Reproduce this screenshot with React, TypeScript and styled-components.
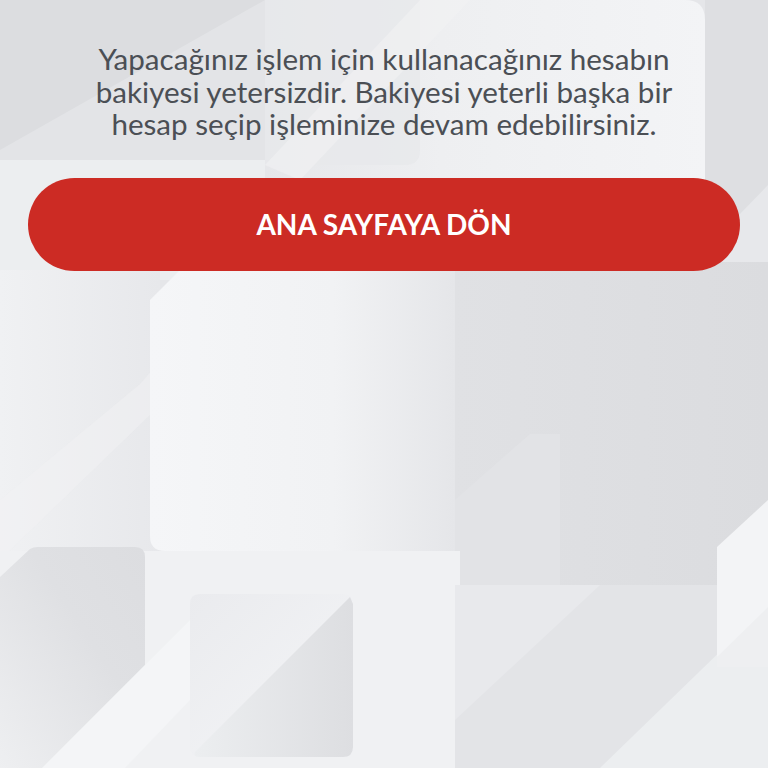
import React from "react";
import styled, { createGlobalStyle } from "styled-components";

const Global = createGlobalStyle`
  html, body { margin: 0; padding: 0; }
  body { font-family: Lato, "Noto Sans", sans-serif; background: #e5e6e9; }
`;

const Screen = styled.main`
  position: relative;
  width: 768px;
  height: 768px;
  overflow: hidden;
  background: #e5e6e9;
`;

const Backdrop = styled.svg`
  position: absolute;
  inset: 0;
  width: 768px;
  height: 768px;
  z-index: 0;
`;

const Content = styled.section`
  position: relative;
  z-index: 1;
  display: flex;
  flex-direction: column;
  align-items: center;
  padding: 43px 28px 0;
  gap: 37px;
`;

const Message = styled.p`
  margin: 0;
  width: 620px;
  text-align: center;
  font-family: Lato, "Noto Sans", sans-serif;
  font-size: 29.6px;
  line-height: 32.5px;
  color: #4b4f55;
`;

const HomeButton = styled.button`
  width: 712px;
  height: 93px;
  border: none;
  border-radius: 47px;
  background: #cc2b24;
  color: #ffffff;
  font-family: Lato, "Noto Sans", sans-serif;
  font-weight: 700;
  font-size: 28px;
  cursor: pointer;
`;

function Background() {
  return (
    <Backdrop viewBox="0 0 768 768" aria-hidden="true">
      <defs>
        <linearGradient id="panel" x1="0" y1="0" x2="1" y2="0">
          <stop offset="0" stopColor="#e6e7ea" />
          <stop offset="0.4" stopColor="#eeeff1" />
          <stop offset="1" stopColor="#f3f4f6" />
        </linearGradient>
        <linearGradient id="mid" x1="0" y1="0" x2="1" y2="0">
          <stop offset="0" stopColor="#f5f6f8" />
          <stop offset="0.6" stopColor="#f1f2f4" />
          <stop offset="1" stopColor="#e5e6e9" />
        </linearGradient>
        <linearGradient id="leftcol" x1="0" y1="0" x2="1" y2="0">
          <stop offset="0" stopColor="#f0f1f3" />
          <stop offset="1" stopColor="#e7e8eb" />
        </linearGradient>
        <linearGradient id="blshape" x1="0" y1="1" x2="1" y2="0">
          <stop offset="0" stopColor="#eeeff1" />
          <stop offset="0.6" stopColor="#dfe0e3" />
          <stop offset="1" stopColor="#dcdde0" />
        </linearGradient>
        <linearGradient id="sqlight" x1="0" y1="0" x2="1" y2="1">
          <stop offset="0" stopColor="#eaebee" />
          <stop offset="1" stopColor="#f4f5f7" />
        </linearGradient>
        <linearGradient id="sqdark" x1="0" y1="0" x2="1" y2="0">
          <stop offset="0" stopColor="#eceef0" />
          <stop offset="1" stopColor="#dddee1" />
        </linearGradient>
        <linearGradient id="right" x1="0" y1="0" x2="1" y2="0">
          <stop offset="0" stopColor="#e0e1e4" />
          <stop offset="1" stopColor="#dbdcdf" />
        </linearGradient>
      </defs>

      <rect x="0" y="0" width="268" height="162" fill="#e3e4e7" />
      <polygon points="0,0 265,0 0,150" fill="#dcdde0" />
      <rect x="0" y="160" width="270" height="120" fill="#eceef0" />
      <path d="M265,0 L685,0 Q705,0 705,20 L705,270 L265,270 Z" fill="url(#panel)" />
      <path d="M265,0 L420,0 L420,150 Q420,165 405,165 L265,165 Z" fill="#e7e8eb" opacity="0.8" />
      <polygon points="265,165 420,0 470,0 300,180" fill="#f1f2f4" opacity="0.6" />
      <rect x="705" y="0" width="63" height="290" fill="#dedfe2" />
      <polygon points="705,250 768,185 768,300 705,300" fill="#e7e8eb" />
      <rect x="0" y="270" width="160" height="290" fill="url(#leftcol)" />
      <polygon points="0,500 140,384 240,270 300,270 0,560" fill="#f1f2f4" opacity="0.5" />
      <rect x="455" y="262" width="313" height="330" fill="url(#right)" />
      <polygon points="455,590 455,500 530,434 560,434 560,590" fill="#e2e3e6" />
      <path d="M150,300 L188,262 L455,262 L455,551 L165,551 Q150,551 150,536 Z" fill="url(#mid)" />
      <rect x="0" y="551" width="460" height="217" fill="#f0f1f3" />
      <rect x="455" y="585" width="313" height="183" fill="#e3e4e7" />
      <polygon points="455,585 600,585 455,720" fill="#e8e9ec" />
      <polygon points="600,768 768,605 768,768" fill="#eceef0" />
      <path d="M717,547 L768,500 L768,667 L730,667 Q717,667 717,654 Z" fill="#f3f4f6" />
      <polygon points="717,657 768,607 768,667 717,667" fill="#eeeff1" />
      <path d="M0,577 L30,549 Q33,547 38,547 L135,547 Q145,547 145,557 L145,665 L42,768 L0,768 Z" fill="url(#blshape)" />
      <polygon points="42,768 145,665 190,620 190,700 125,768" fill="#f5f6f8" opacity="0.7" />
      <path d="M200,594 L343,594 Q353,594 353,604 L353,747 Q353,757 343,757 L200,757 Q190,757 190,747 L190,604 Q190,594 200,594 Z" fill="url(#sqlight)" />
      <path d="M350,597 L353,604 L353,747 Q353,757 343,757 L200,757 Q193,757 195,752 Z" fill="url(#sqdark)" />
    </Backdrop>
  );
}

export default function App() {
  return (
    <>
      <Global />
      <Screen>
        <Background />
        <Content>
          <Message>
            Yapacağınız işlem için kullanacağınız hesabın bakiyesi yetersizdir. Bakiyesi yeterli başka bir hesap seçip işleminize devam edebilirsiniz.
          </Message>
          <HomeButton type="button">ANA SAYFAYA DÖN</HomeButton>
        </Content>
      </Screen>
    </>
  );
}
